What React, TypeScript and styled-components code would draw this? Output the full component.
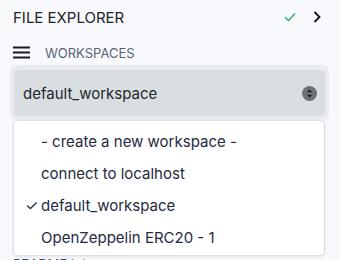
import React from "react";
import styled, { createGlobalStyle } from "styled-components";

const Global = createGlobalStyle`
  html, body { margin: 0; padding: 0; background: #f8f9fc; }
  body { font-family: Inter, "Noto Sans", sans-serif; -webkit-font-smoothing: antialiased; }
`;

const Panel = styled.div`
  position: relative;
  width: 340px;
  height: 260px;
  overflow: hidden;
  background: #f8f9fc;
`;

const Header = styled.div`
  display: flex;
  align-items: center;
  justify-content: space-between;
  height: 34px;
  padding: 0 19px 0 13px;
`;

const Title = styled.span`
  font-size: 15px;
  color: #222326;
`;

const HeaderIcons = styled.div`
  display: flex;
  align-items: center;
  gap: 17px;
`;

const WsRow = styled.div`
  display: flex;
  align-items: center;
  gap: 14px;
  height: 24px;
  margin-top: 7px;
  padding: 0 13px;
`;

const WsLabel = styled.span`
  font-size: 13px;
  color: #5b6477;
`;

const SelectRing = styled.div`
  margin: 0 11px 0 10px;
  padding: 5px 4px 4px;
  background: #e9ebef;
  border-radius: 6px;
`;

const SelectBox = styled.div`
  display: flex;
  align-items: center;
  justify-content: space-between;
  height: 46px;
  padding: 0 8px 0 9px;
  background: #d9dfe1;
  border-radius: 4px;
  font-size: 15px;
  color: #23262b;
`;

const Tree = styled.div`
  padding: 133px 13px 0;
`;

const TreeRow = styled.div`
  height: 22px;
  display: flex;
  align-items: center;
  font-size: 13px;
  color: #444a55;
`;

const Menu = styled.ul`
  position: absolute;
  left: 13px;
  top: 120px;
  width: 312px;
  height: 136px;
  box-sizing: border-box;
  margin: 0;
  padding: 4px 0;
  list-style: none;
  background: #ffffff;
  border: 1px solid #dcdfe4;
  border-radius: 4px;
  box-shadow: 0 1px 3px rgba(0, 0, 0, 0.08);
`;

const MenuItem = styled.li`
  position: relative;
  height: 32px;
  display: flex;
  align-items: center;
  padding-left: 27px;
  font-size: 15px;
  color: #1f2a3e;
`;

const Check = styled.span`
  position: absolute;
  left: 11px;
  font-size: 15px;
`;

const Hamburger = () => (
  <svg width="18" height="14" viewBox="0 0 18 14">
    <rect x="0" y="0.5" width="17" height="2" fill="#1b1c1f" />
    <rect x="0" y="5.5" width="17" height="2" fill="#1b1c1f" />
    <rect x="0" y="10.5" width="17" height="2" fill="#1b1c1f" />
  </svg>
);

const GreenCheck = () => (
  <svg width="12" height="10" viewBox="0 0 12 10">
    <path d="M1 5 L4.5 8.5 L11 1.5" stroke="#3fb37a" strokeWidth="1.6" fill="none" />
  </svg>
);

const Chevron = () => (
  <svg width="8" height="12" viewBox="0 0 8 12">
    <path d="M1.5 1 L6.5 6 L1.5 11" stroke="#111" strokeWidth="1.8" fill="none" />
  </svg>
);

const SortIcon = () => (
  <svg width="15" height="15" viewBox="0 0 15 15">
    <circle cx="7.5" cy="7.5" r="7.5" fill="#6c7278" />
    <path d="M4.7 6.3 L7.5 3.6 L10.3 6.3 Z" fill="#1d2023" />
    <path d="M4.7 8.7 L7.5 11.4 L10.3 8.7 Z" fill="#1d2023" />
  </svg>
);

export default function App() {
  return (
    <>
      <Global />
      <Panel>
        <Header>
          <Title>FILE EXPLORER</Title>
          <HeaderIcons>
            <GreenCheck />
            <Chevron />
          </HeaderIcons>
        </Header>
        <WsRow>
          <Hamburger />
          <WsLabel>WORKSPACES</WsLabel>
        </WsRow>
        <SelectRing>
          <SelectBox>
            <span>default_workspace</span>
            <SortIcon />
          </SelectBox>
        </SelectRing>
        <Tree>
          <TreeRow>README.txt</TreeRow>
        </Tree>
        <Menu>
          <MenuItem>- create a new workspace -</MenuItem>
          <MenuItem>connect to localhost</MenuItem>
          <MenuItem>
            <Check>✓</Check>default_workspace
          </MenuItem>
          <MenuItem>OpenZeppelin ERC20 - 1</MenuItem>
        </Menu>
      </Panel>
    </>
  );
}
